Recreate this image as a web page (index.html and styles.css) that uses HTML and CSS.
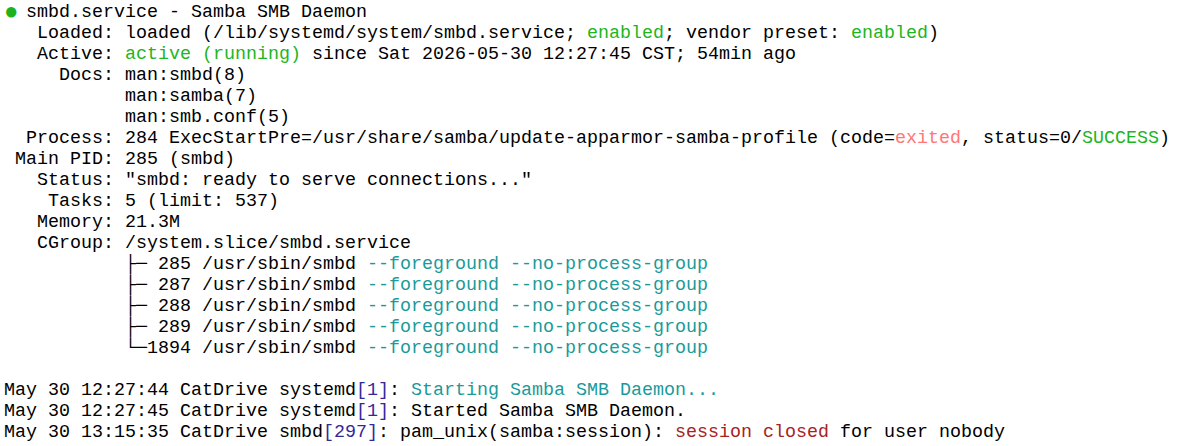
FILE: index.html
```html
<!DOCTYPE html>
<html>
<head>
<meta charset="utf-8">
<link rel="stylesheet" href="styles.css">
</head>
<body>
<pre class="term"><span class="dot">●</span> smbd.service - Samba SMB Daemon
   Loaded: loaded (/lib/systemd/system/smbd.service; <span class="g">enabled</span>; vendor preset: <span class="g">enabled</span>)
   Active: <span class="g">active (running)</span> since Sat 2026-05-30 12:27:45 CST; 54min ago
     Docs: man:smbd(8)
           man:samba(7)
           man:smb.conf(5)
  Process: 284 ExecStartPre=/usr/share/samba/update-apparmor-samba-profile (code=<span class="r">exited</span>, status=0/<span class="g">SUCCESS</span>)
 Main PID: 285 (smbd)
   Status: "smbd: ready to serve connections..."
    Tasks: 5 (limit: 537)
   Memory: 21.3M
   CGroup: /system.slice/smbd.service
           ├─ 285 /usr/sbin/smbd <span class="c">--foreground --no-process-group</span>
           ├─ 287 /usr/sbin/smbd <span class="c">--foreground --no-process-group</span>
           ├─ 288 /usr/sbin/smbd <span class="c">--foreground --no-process-group</span>
           ├─ 289 /usr/sbin/smbd <span class="c">--foreground --no-process-group</span>
           └─1894 /usr/sbin/smbd <span class="c">--foreground --no-process-group</span>

May 30 12:27:44 CatDrive systemd<span class="b">[1]</span>: <span class="c">Starting Samba SMB Daemon...</span>
May 30 12:27:45 CatDrive systemd<span class="b">[1]</span>: Started Samba SMB Daemon.
May 30 13:15:35 CatDrive smbd<span class="b">[297]</span>: pam_unix(samba:session): <span class="dr">session closed</span> for user nobody
</pre>
</body>
</html>
```
FILE: styles.css
```css
html, body {
  margin: 0;
  padding: 0;
  background: #ffffff;
}
.term {
  margin: 0;
  padding: 2px 0 0 4px;
  font-family: "Liberation Mono", "Courier New", monospace;
  font-size: 18.33px;
  line-height: 21px;
  color: #000000;
  white-space: pre;
}
.dot {
  display: inline-block;
  width: 11px;
  text-align: center;
  font-size: 24px;
  line-height: 21px;
  vertical-align: top;
  color: #1db31d;
}
.g { color: #1eb51e; }
.r { color: #ff7676; }
.c { color: #1a9a9a; }
.dr { color: #a82222; }
.b { color: #33289a; }
```
